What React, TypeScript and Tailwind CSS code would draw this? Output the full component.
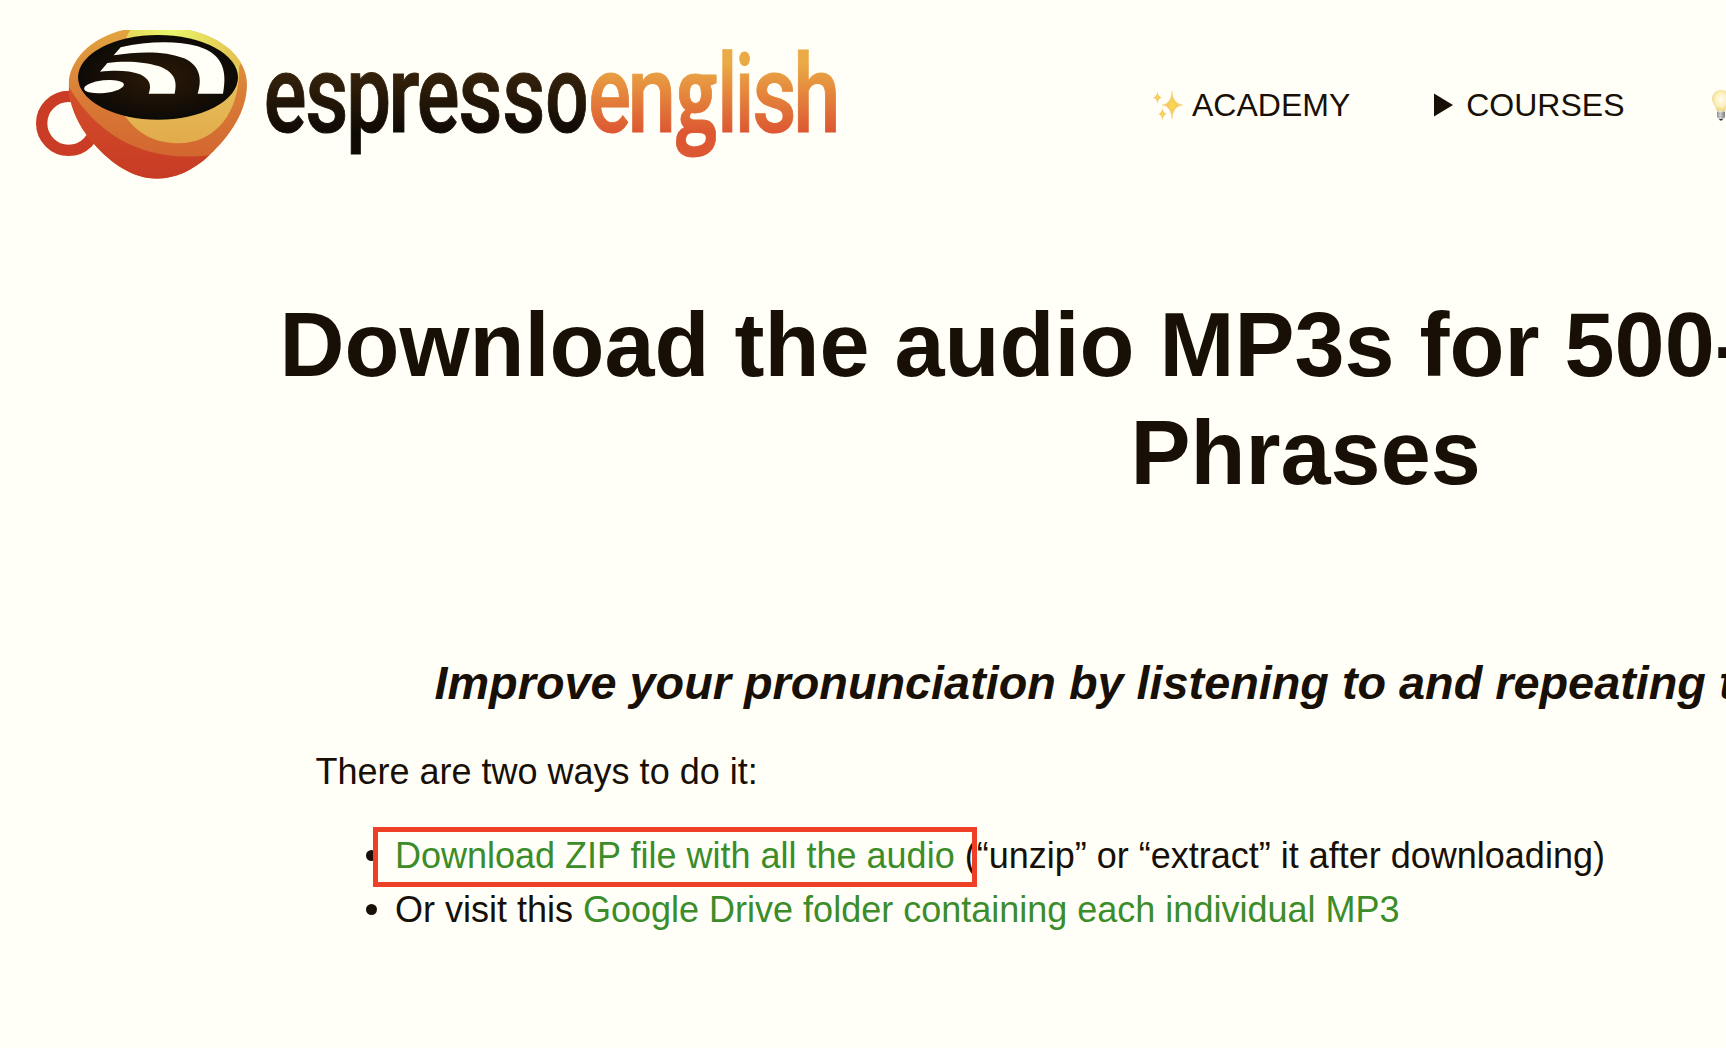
function Cup() {
  return (
    <svg viewBox="0 0 720 540" className="h-[180px] w-[240px] shrink-0">
      <defs>
        <linearGradient id="cup-red" x1="0" y1="0" x2="0" y2="1">
          <stop offset="0" stopColor="#d5502a" />
          <stop offset="1" stopColor="#c63a24" />
        </linearGradient>
        <linearGradient id="cup-orange" x1="0" y1="0" x2="0" y2="1">
          <stop offset="0" stopColor="#e2a53f" />
          <stop offset="0.45" stopColor="#d97c36" />
          <stop offset="1" stopColor="#d05d2d" />
        </linearGradient>
        <linearGradient id="cup-gold" x1="0" y1="0" x2="0" y2="1">
          <stop offset="0" stopColor="#e6d95c" />
          <stop offset="0.5" stopColor="#e4bb57" />
          <stop offset="1" stopColor="#e2aa4b" />
        </linearGradient>
        <radialGradient id="cup-rim" gradientUnits="userSpaceOnUse" cx="450" cy="65" r="210">
          <stop offset="0" stopColor="#e9f86a" />
          <stop offset="1" stopColor="#e3c552" />
        </radialGradient>
        <radialGradient id="cup-coffee">
          <stop offset="0" stopColor="#2d1a07" />
          <stop offset="1" stopColor="#0d0a06" />
        </radialGradient>
        <clipPath id="cup-body">
          <path d="M310 60H505C605 80 681 145 681 222C681 305 630 378 568 436C520 482 465 506 412 506C340 506 275 462 222 402C180 355 146 290 146 225C146 150 215 82 310 60Z" />
        </clipPath>
      </defs>
      <circle cx="146" cy="340" r="81" fill="none" stroke="#ca3c26" strokeWidth="34" />
      <g clipPath="url(#cup-body)">
        <rect x="140" y="55" width="550" height="455" fill="url(#cup-orange)" />
        <path d="M140 220C210 345 340 462 568 436L600 430L560 520H140Z" fill="url(#cup-red)" />
        <path d="M310 310C350 375 410 400 475 400C585 400 664 310 657 160L500 120Z" fill="url(#cup-gold)" />
        <path d="M333 55L318 84L480 110L657 170C690 120 600 50 540 55Z" fill="url(#cup-rim)" />
      </g>
      <ellipse cx="414" cy="202" rx="240" ry="127" fill="url(#cup-coffee)" />
      <g fill="#fffff8">
        <path d="M281 136L302 112C380 94 470 91 533 109C602 130 624 175 609 251H533C548 205 538 165 492 145C434 121 350 125 281 136Z" />
        <path d="M240 185L262 159C315 151 375 155 415 168C462 185 473 210 464 251H386C396 225 388 206 360 193C325 179 278 181 240 185Z" />
        <ellipse cx="252" cy="230" rx="60" ry="19" transform="rotate(-6 252 230)" />
      </g>
    </svg>
  );
}

/* ink start and ink width of each glyph at 110px */
const ink: Record<string, [number, number]> = {
  e: [4.6, 50.5],
  s: [3.6, 48],
  p: [7.2, 50.5],
  r: [7.2, 30.5],
  o: [3.8, 53.5],
  n: [6.8, 47.5],
  g: [2.2, 57],
  l: [7.6, 13.4],
  i: [7.2, 14.2],
  h: [6.8, 47.5],
};

type Letter = [string, number, number];

/* left edge and width of every letter of the word mark */
const dark: Letter[] = [
  ["e", 7, 37], ["s", 48, 37], ["p", 91.5, 37], ["r", 134, 25], ["e", 160, 37], ["s", 201, 38], ["s", 245, 37], ["o", 288, 37.5],
];
const warm: Letter[] = [
  ["e", 331.5, 37], ["n", 373, 38], ["g", 417.5, 38], ["l", 463, 9.5], ["i", 480, 9.5], ["s", 495, 38], ["h", 538.5, 37],
];

function Word({ letters, fill }: { letters: Letter[]; fill: string }) {
  return (
    <g fill={fill} stroke={fill} strokeWidth="1" fontSize="109" fontWeight="500">
      {letters.map(([c, x, w], i) => {
        const k = w / ink[c][1];
        const isG = c === "g";
        return (
          <text
            key={i}
            transform={`translate(${x - ink[c][0] * k} 121.5) scale(${k} ${isG ? 0.96 : 1})`}
            fontFamily={isG ? "Open Sans, sans-serif" : "Roboto, sans-serif"}
            fontWeight={isG ? 700 : 500}
          >
            {c}
          </text>
        );
      })}
    </g>
  );
}

function WordMark() {
  return (
    <svg viewBox="0 0 590 180" className="h-[180px] w-[590px] shrink-0">
      <defs>
        <linearGradient id="wm-dark" gradientUnits="userSpaceOnUse" x1="0" y1="-58" x2="0" y2="0">
          <stop offset="0" stopColor="#35220b" />
          <stop offset="1" stopColor="#100a04" />
        </linearGradient>
        <linearGradient id="wm-warm" gradientUnits="userSpaceOnUse" x1="0" y1="-68" x2="0" y2="0">
          <stop offset="0" stopColor="#eaaa45" />
          <stop offset="1" stopColor="#dd5832" />
        </linearGradient>
      </defs>
      <Word letters={dark} fill="url(#wm-dark)" />
      <Word letters={warm} fill="url(#wm-warm)" />
    </svg>
  );
}

function Sparkles() {
  return (
    <svg viewBox="0 0 32 32" className="mr-2 size-8 shrink-0">
      <defs>
        <radialGradient id="spark">
          <stop offset="0" stopColor="#fbdc4c" />
          <stop offset="0.4" stopColor="#f4cb5c" />
          <stop offset="1" stopColor="#f3c9a8" />
        </radialGradient>
      </defs>
      <g fill="url(#spark)">
        <path d="M20 2Q20.800 15 31 16Q20.800 17 20 30Q19.200 17 10 16Q19.200 15 20 2Z" stroke="#f6d070" strokeWidth="0.500" />
        <path d="M5.500 2Q6.100 7.800 10 8.500Q6.100 9.200 5.500 15Q4.900 9.200 1 8.500Q4.900 7.800 5.500 2Z" />
        <path d="M10.500 18.500Q11.100 24.400 14.800 25Q11.100 25.600 10.500 31.500Q9.900 25.600 6 25Q9.900 24.400 10.500 18.500Z" />
      </g>
    </svg>
  );
}

function Bulb() {
  return (
    <svg viewBox="0 0 20 32" className="h-8 w-5 shrink-0">
      <defs>
        <radialGradient id="glass" cx="0.5" cy="0.45" r="0.55">
          <stop offset="0" stopColor="#fffdf0" />
          <stop offset="0.6" stopColor="#fbf0bd" />
          <stop offset="1" stopColor="#eed680" />
        </radialGradient>
        <linearGradient id="socket">
          <stop offset="0" stopColor="#8b8b8b" />
          <stop offset="0.4" stopColor="#dcdcdc" />
          <stop offset="1" stopColor="#777" />
        </linearGradient>
      </defs>
      <path d="M10 1C4.500 1 1 5 1 10C1 14.500 5 17 5.800 22H14.200C15 17 19 14.500 19 10C19 5 15.500 1 10 1Z" fill="url(#glass)" />
      <path d="M6 22.500H14V28L12 30H8L6 28Z" fill="url(#socket)" />
      <path d="M6 25H14M6 27.500H14" stroke="#999" strokeWidth="0.500" />
      <path d="M8 30H12L11 31.500H9Z" fill="#333" />
    </svg>
  );
}

function Bullet() {
  return <span className="mr-[18px] size-[11px] shrink-0 rounded-full bg-[#181006]" />;
}

export default function App() {
  return (
    <div className="h-[1048px] w-[1726px] overflow-hidden bg-[#fffff8] font-['Liberation_Sans',Arial,sans-serif] text-[#181006]">
      <header className="flex h-[291px] items-start pt-[10px] pl-[20px]">
        <Cup />
        <WordMark />
        <nav className="mt-[71px] ml-[302px] flex h-12 items-center text-[32px] leading-[48px] whitespace-nowrap">
          <a className="flex items-center">
            <Sparkles />
            ACADEMY
          </a>
          <a className="ml-[84px] flex items-center">
            <svg viewBox="0 0 19 24" className="mr-[13px] h-6 w-[19px] shrink-0">
              <path d="M0 0.500V23.500L19 12Z" fill="#181006" />
            </svg>
            COURSES
          </a>
          <a className="ml-[86px] flex items-center">
            <Bulb />
          </a>
        </nav>
      </header>
      <main>
        <h1 className="pl-[279.500px] text-[90px] leading-[108px] font-bold whitespace-nowrap">
          Download the audio MP3s for 500-
          <span className="block pl-[851px]">Phrases</span>
        </h1>
        <h2 className="mt-[148px] pl-[434.500px] text-[46.8px] leading-[56px] font-bold whitespace-nowrap italic">
          Improve your pronunciation by listening to and repeating the
        </h2>
        <p className="mt-[34px] pl-[315.500px] text-[36px] leading-[54px]">There are two ways to do it:</p>
        <ul className="mt-[29px] pl-[366px] text-[36px] leading-[54px] whitespace-nowrap">
          <li className="relative flex h-[54px] items-center">
            <Bullet />
            <span className="pt-0.5">
              <a className="text-[#3c8c29]">Download ZIP file with all the audio</a> (“unzip” or “extract” it after
              downloading)
            </span>
            <span className="absolute -top-px left-[7px] h-[60px] w-[604px] border-5 border-[#ee4026]" />
          </li>
          <li className="flex h-[54px] items-center">
            <Bullet />
            <span className="pt-0.5">
              Or visit this <a className="text-[#3c8c29]">Google Drive folder containing each individual MP3</a>
            </span>
          </li>
        </ul>
      </main>
    </div>
  );
}
